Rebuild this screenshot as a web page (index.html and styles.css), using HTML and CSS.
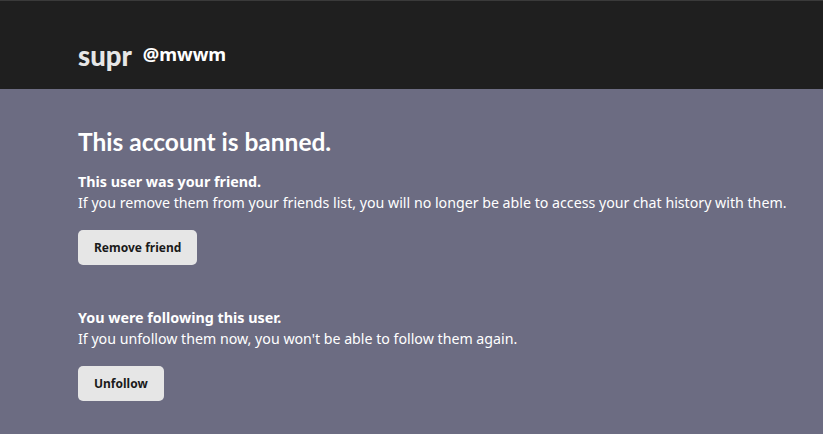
FILE: index.html
```html
<!DOCTYPE html>
<html>
<head>
<meta charset="utf-8">
<link rel="stylesheet" href="styles.css">
</head>
<body>
<header class="topbar">
  <div class="names">
    <span class="display">supr</span>
    <span class="handle">@mwwm</span>
  </div>
</header>
<main class="content">
  <h1 class="title">This account is banned.</h1>
  <section class="block">
    <p class="lead">This user was your friend.</p>
    <p class="desc">If you remove them from your friends list, you will no longer be able to access your chat history with them.</p>
    <button class="btn">Remove friend</button>
  </section>
  <section class="block">
    <p class="lead">You were following this user.</p>
    <p class="desc">If you unfollow them now, you won't be able to follow them again.</p>
    <button class="btn">Unfollow</button>
  </section>
</main>
</body>
</html>
```
FILE: styles.css
```css
html, body {
  margin: 0;
  padding: 0;
  height: 100%;
}
body {
  background: #6c6c82;
  font-family: "Noto Sans", sans-serif;
  color: #fff;
}
.topbar {
  background: #1f1f1f;
  border-top: 1px solid #3a3a3a;
  height: 89px;
  box-sizing: border-box;
  padding: 38px 78px 0;
}
.names {
  display: flex;
  align-items: baseline;
  gap: 11px;
}
.display {
  font-family: Lato, sans-serif;
  font-weight: 900;
  font-size: 27.5px;
  color: #e6e6e6;
}
.handle {
  font-family: "Noto Sans", sans-serif;
  font-weight: 700;
  font-size: 18.3px;
  color: #fff;
  position: relative;
  top: -5px;
}
.content {
  padding: 0 78px;
}
.title {
  font-family: Lato, sans-serif;
  font-weight: 700;
  font-size: 24.5px;
  margin: 0;
  padding-top: 38px;
  line-height: 30px;
}
.block {
  margin-top: 14px;
}
.block + .block {
  margin-top: 42px;
}
.lead {
  margin: 0;
  font-weight: 700;
  font-size: 14.3px;
  line-height: 21px;
}
.desc {
  margin: 0;
  font-size: 14.2px;
  line-height: 21px;
  white-space: nowrap;
}
.btn {
  display: block;
  margin-top: 17px;
  background: #e6e6e6;
  border: none;
  border-radius: 5px;
  height: 35px;
  padding: 0 16px;
  font-family: "Noto Sans", sans-serif;
  font-weight: 700;
  font-size: 12px;
  color: #1a1a1a;
}
```
